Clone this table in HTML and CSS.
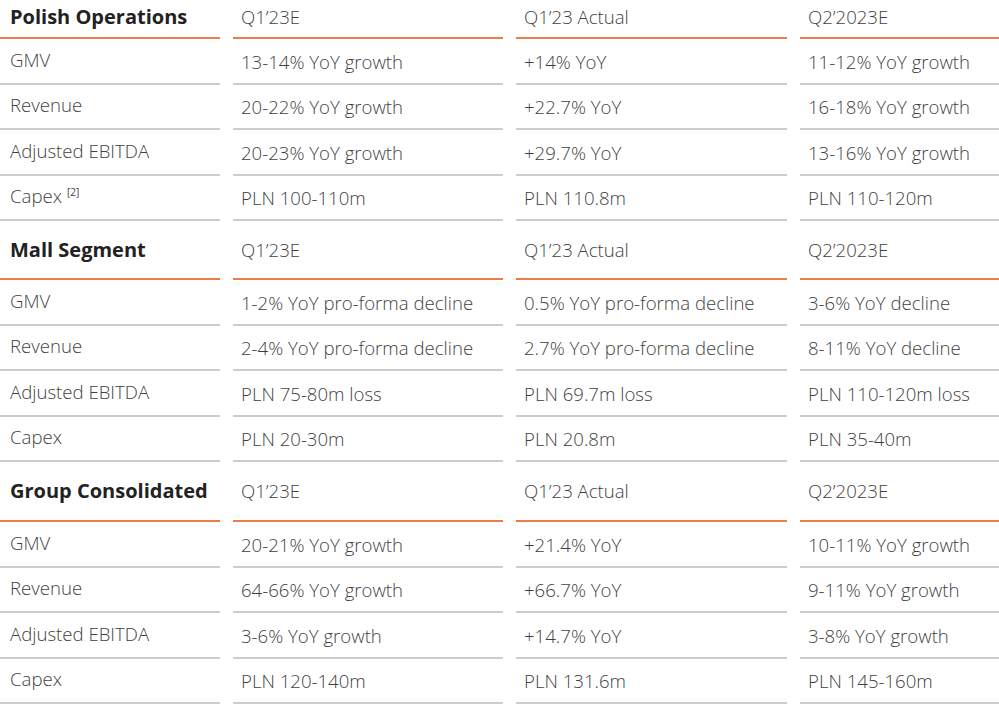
FILE: index.html
```html
<!DOCTYPE html>
<html lang="en">
<head>
<meta charset="utf-8">
<title>Guidance</title>
<link rel="stylesheet" href="styles.css">
</head>
<body>
<div class="page">
  <section class="block first">
    <div class="cell head label">Polish Operations</div>
    <div class="cell head">Q1’23E</div>
    <div class="cell head">Q1’23 Actual</div>
    <div class="cell head">Q2’2023E</div>

    <div class="cell row label">GMV</div>
    <div class="cell row val">13-14% YoY growth</div>
    <div class="cell row val">+14% YoY</div>
    <div class="cell row val">11-12% YoY growth</div>

    <div class="cell row label">Revenue</div>
    <div class="cell row val">20-22% YoY growth</div>
    <div class="cell row val">+22.7% YoY</div>
    <div class="cell row val">16-18% YoY growth</div>

    <div class="cell row label">Adjusted EBITDA</div>
    <div class="cell row val">20-23% YoY growth</div>
    <div class="cell row val">+29.7% YoY</div>
    <div class="cell row val">13-16% YoY growth</div>

    <div class="cell row label">Capex <sup class="note">[2]</sup></div>
    <div class="cell row val">PLN 100-110m</div>
    <div class="cell row val">PLN 110.8m</div>
    <div class="cell row val">PLN 110-120m</div>
  </section>

  <section class="block">
    <div class="cell head label">Mall Segment</div>
    <div class="cell head">Q1’23E</div>
    <div class="cell head">Q1’23 Actual</div>
    <div class="cell head">Q2’2023E</div>

    <div class="cell row label">GMV</div>
    <div class="cell row val">1-2% YoY pro-forma decline</div>
    <div class="cell row val">0.5% YoY pro-forma decline</div>
    <div class="cell row val">3-6% YoY decline</div>

    <div class="cell row label">Revenue</div>
    <div class="cell row val">2-4% YoY pro-forma decline</div>
    <div class="cell row val">2.7% YoY pro-forma decline</div>
    <div class="cell row val">8-11% YoY decline</div>

    <div class="cell row label">Adjusted EBITDA</div>
    <div class="cell row val">PLN 75-80m loss</div>
    <div class="cell row val">PLN 69.7m loss</div>
    <div class="cell row val">PLN 110-120m loss</div>

    <div class="cell row label">Capex</div>
    <div class="cell row val">PLN 20-30m</div>
    <div class="cell row val">PLN 20.8m</div>
    <div class="cell row val">PLN 35-40m</div>
  </section>

  <section class="block last">
    <div class="cell head label">Group Consolidated</div>
    <div class="cell head">Q1’23E</div>
    <div class="cell head">Q1’23 Actual</div>
    <div class="cell head">Q2’2023E</div>

    <div class="cell row label">GMV</div>
    <div class="cell row val">20-21% YoY growth</div>
    <div class="cell row val">+21.4% YoY</div>
    <div class="cell row val">10-11% YoY growth</div>

    <div class="cell row label">Revenue</div>
    <div class="cell row val">64-66% YoY growth</div>
    <div class="cell row val">+66.7% YoY</div>
    <div class="cell row val">9-11% YoY growth</div>

    <div class="cell row label">Adjusted EBITDA</div>
    <div class="cell row val">3-6% YoY growth</div>
    <div class="cell row val">+14.7% YoY</div>
    <div class="cell row val">3-8% YoY growth</div>

    <div class="cell row label">Capex</div>
    <div class="cell row val">PLN 120-140m</div>
    <div class="cell row val">PLN 131.6m</div>
    <div class="cell row val">PLN 145-160m</div>
  </section>
</div>
</body>
</html>
```
FILE: styles.css
```css
html, body {
  margin: 0;
  padding: 0;
  background: #ffffff;
}

body {
  font-family: "Open Sans", "Noto Sans", "DejaVu Sans", sans-serif;
  font-size: 18.6px;
  font-weight: 300;
  color: #3f3f3f;
}

.page {
  width: 999px;
  overflow: hidden;
}

.block {
  display: grid;
  grid-template-columns: 220px 270px 271px 1fr;
  column-gap: 13px;
}

.cell {
  box-sizing: border-box;
  display: flex;
  align-items: center;
  padding-left: 8px;
  white-space: nowrap;
  line-height: 24px;
}

.cell.label {
  padding-left: 10px;
}

.head {
  height: 59px;
  border-bottom: 2px solid #ea7d4c;
}

.block.first .head {
  height: 39px;
  padding-bottom: 4px;
}

.block.last .head {
  height: 60px;
}

.head.label {
  font-size: 20px;
  font-weight: 700;
  color: #222222;
}

.row {
  height: 45.5px;
  border-bottom: 2px solid #cccccc;
}

.row.label {
  padding-bottom: 2px;
}

.row.val {
  padding-top: 2px;
}

.note {
  font-size: 10px;
  line-height: 1;
  margin-left: 5px;
  position: relative;
  top: -4px;
  vertical-align: top;
  font-weight: 400;
}
```
